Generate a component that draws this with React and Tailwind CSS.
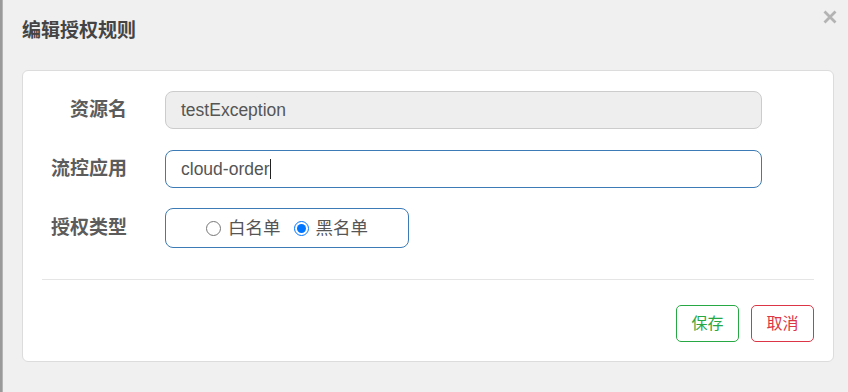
const cjk = { fontFamily: '"Liberation Sans", "Noto Sans CJK SC", sans-serif' };

const Field = ({ label, children }) => (
  <div className="flex items-center">
    <div className="w-[85px] text-right text-[19px] font-bold text-[#5c5c5c]">{label}</div>
    <div className="ml-[38px]">{children}</div>
  </div>
);

const Radio = ({ label, checked }) => (
  <label className="flex items-center gap-[7px]">
    <input
      type="radio"
      name="strategy"
      defaultChecked={checked}
      className="w-[15px] h-[15px] m-0 accent-[#0075ff]"
    />
    <span>{label}</span>
  </label>
);

const App = () => {
  return (
    <div className="flex w-[848px] h-[392px] overflow-hidden" style={cjk}>
      <div className="w-[3px] bg-[#9a9a9a] border-r border-[#b5b5b5]" />
      <div className="relative flex-1 bg-[#f0f0f0] pt-[17px] pl-[19px]">
        <button className="absolute top-[10px] right-[11px]">
          <svg width="14" height="14" viewBox="0 0 14 14">
            <path d="M1.5 1.5 L12.5 12.5 M12.5 1.5 L1.5 12.5" stroke="#b3b3b3" strokeWidth="2.8" />
          </svg>
        </button>
        <h1 className="h-[28px] leading-[28px] text-[19px] font-bold text-[#444]">编辑授权规则</h1>

        <div className="mt-[25px] w-[812px] h-[292px] bg-white border border-[#dcdcdc] rounded-[6px] pt-[20px] pl-[19px] pr-[19px]">
          <div className="flex flex-col gap-[21px]">
            <Field label="资源名">
              <div className="w-[597px] h-[38px] flex items-center px-[15px] bg-[#eeeeee] border border-[#cccccc] rounded-[8px] text-[17.5px] text-[#555]">
                testException
              </div>
            </Field>
            <Field label="流控应用">
              <div className="w-[597px] h-[38px] flex items-center px-[15px] bg-white border border-[#3c7bb5] rounded-[8px] text-[17.5px] text-[#555]">
                cloud-order
                <span className="w-px h-[20px] bg-[#222]" />
              </div>
            </Field>
          </div>
          <div className="mt-[20px]">
            <Field label="授权类型">
              <div className="w-[244px] h-[40px] flex items-center justify-center gap-[13px] border border-[#3c7bb5] rounded-[8px] text-[17.5px] text-[#555]">
                <Radio label="白名单" />
                <Radio label="黑名单" checked />
              </div>
            </Field>
          </div>

          <div className="mt-[31px] h-px bg-[#e5e5e5]" />

          <div className="mt-[25px] flex justify-end gap-[12px]">
            <button className="w-[63px] h-[37px] border border-[#28a745] rounded-[5px] text-[16px] text-[#28a745] bg-white">
              保存
            </button>
            <button className="w-[63px] h-[37px] border border-[#dc3545] rounded-[5px] text-[16px] text-[#dc3545] bg-white">
              取消
            </button>
          </div>
        </div>
      </div>
    </div>
  );
};

export default App;
